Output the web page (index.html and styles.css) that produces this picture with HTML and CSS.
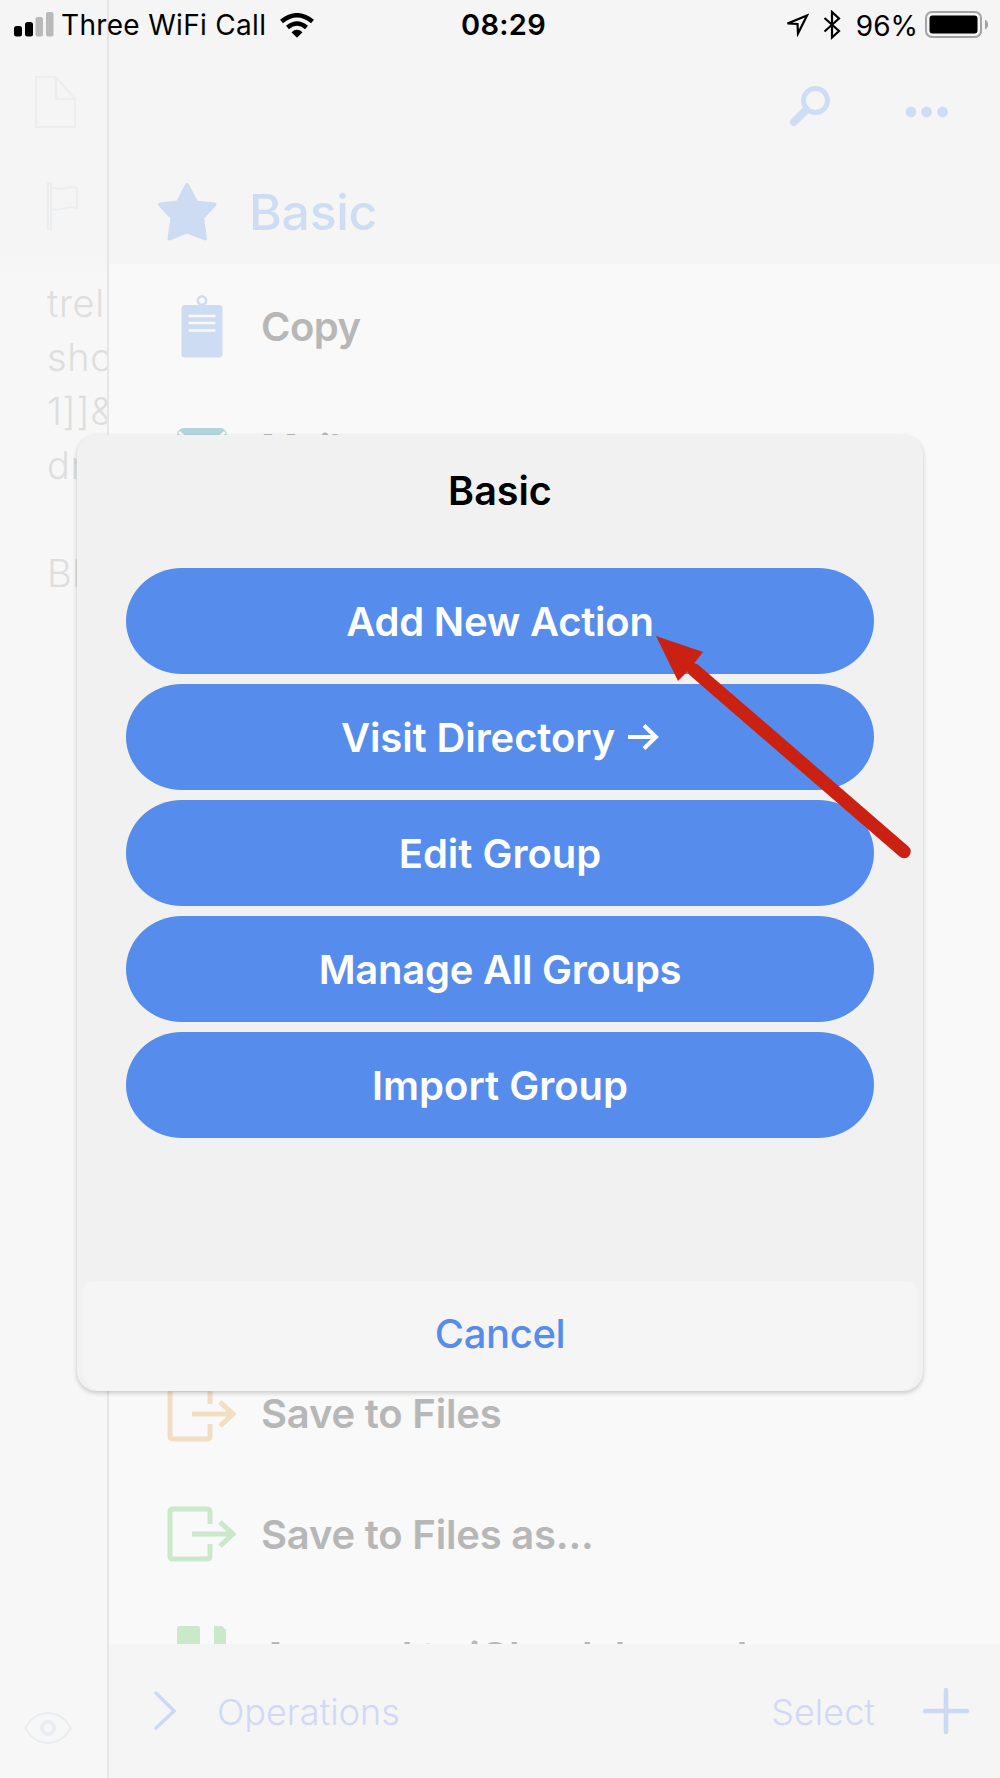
FILE: index.html
```html
<!DOCTYPE html>
<html lang="en">
<head>
<meta charset="utf-8">
<title>Basic actions</title>
<link rel="stylesheet" href="styles.css">
</head>
<body>
<div class="screen">
  <aside class="draft">
    <svg class="draft-doc" width="43" height="54" viewBox="0 0 43 54"><path d="M2 2H22L41 24V52H2ZM22 2V24H41"/></svg>
    <svg class="draft-flag" width="34" height="50" viewBox="0 0 34 50"><path d="M2 2H5V48H2ZM5 6C14 11 22 4 31 7V27C22 24 14 31 5 28"/></svg>
    <p class="draft-text">trel<br>sho<br>1]]&amp;<br>dr<br><br>Bl</p>
    <svg class="draft-eye" width="50" height="34" viewBox="0 0 50 34"><path d="M2 17C8 7 16 2 25 2S42 7 48 17C42 27 34 32 25 32S8 27 2 17Z"/><circle cx="25" cy="17" r="6"/></svg>
  </aside>

  <main class="actions">
    <header class="actions-head">
      <div class="tools">
        <svg width="42" height="42" viewBox="0 0 42 42"><circle cx="26.500" cy="15.500" r="12"/><path class="handle" d="M17 25L5 37"/></svg>
        <svg class="dots" width="44" height="12" viewBox="0 0 44 12"><circle cx="6" cy="6" r="5.400"/><circle cx="21.500" cy="6" r="5.400"/><circle cx="37.500" cy="6" r="5.400"/></svg>
      </div>
      <div class="group">
        <svg width="60" height="60" viewBox="0 0 60 60"><path d="M30 4L39 21.500L57.500 23.500L45 37L48 57.500L30 50.500L12.500 57.500L15.500 37L3 23.500L21 21.500Z"/></svg>
        <h1>Basic</h1>
      </div>
    </header>
    <ul class="list">
      <li class="row">
        <span class="row-icon"><svg class="copy" width="42" height="64" viewBox="0 0 42 64"><circle class="ring" cx="21" cy="6.500" r="4.200"/><rect x=".5" y="11" width="41" height="52.500" rx="3.500"/><path d="M7.500 22H34.500M7.500 29H34.500M7.500 36.500H34.500"/></svg></span>
        Copy
      </li>
      <li class="row">
        <span class="row-icon"><svg class="mail" width="50" height="38" viewBox="0 0 50 38"><rect width="50" height="38" rx="7"/><path d="M2 4L20 20Q25 24 30 20L48 4"/></svg></span>
        <span class="label">Mail</span>
      </li>
      <li class="row-gap"></li>
      <li class="row long">
        <span class="row-icon"><svg class="export orange" width="69" height="56" viewBox="0 0 69 56"><path d="M43 18V6Q43 3 40 3H6Q3 3 3 6V50Q3 53 6 53H40Q43 53 43 50V38M25 28H66M53 16L66 28L53 40"/></svg></span>
        Save to Files
      </li>
      <li class="row long">
        <span class="row-icon"><svg class="export green" width="69" height="56" viewBox="0 0 69 56"><path d="M43 18V6Q43 3 40 3H6Q3 3 3 6V50Q3 53 6 53H40Q43 53 43 50V38M25 28H66M53 16L66 28L53 40"/></svg></span>
        Save to Files as...
      </li>
      <li class="row long">
        <span class="row-icon"><svg class="journal" width="50" height="58" viewBox="0 0 50 58"><path d="M2 0H21Q23 0 23 2V58H0V2Q0 0 2 0ZM37 0H45L49 4V58H37Z"/></svg></span>
        <span class="label">Append to iCloud Journal</span>
      </li>
    </ul>
    <footer class="bar">
      <svg width="24" height="40" viewBox="0 0 24 40"><path d="M2 2L20 20L2 37"/></svg>
      <span class="operations">Operations</span>
      <span class="select">Select</span>
      <svg class="plus" width="48" height="48" viewBox="0 0 48 48"><path d="M3 24H45M24 3V45"/></svg>
    </footer>
  </main>

  <div class="status">
    <div class="carrier">
      <svg width="40" height="26" viewBox="0 0 40 26"><rect x="0" y="14" width="8" height="10.500" rx="2.500"/><rect x="11" y="10" width="8" height="14.500" rx="2.500"/><g fill="#b9b9b9"><rect x="21.500" y="5" width="7.500" height="19.500" rx="2"/><rect x="32" y="0" width="7.500" height="24.500" rx="2"/></g></svg>
      <span class="carrier-name">Three WiFi Call</span>
      <svg class="wifi" width="34" height="25" viewBox="0 0 34 25"><path class="arc" d="M1.500 8.500Q17 -4 32.500 8.500M7.500 14.500Q17 6.500 26.500 14.500"/><path d="M11.500 19.200Q17 14.500 22.500 19.200L17 24.800Z"/></svg>
    </div>
    <span class="clock">08:29</span>
    <div class="power">
      <svg class="locate" width="24" height="24" viewBox="0 0 24 24"><path d="M2.500 10.500L22 2.500L13 20.500L12.500 11Z"/></svg>
      <svg class="bluetooth" width="18" height="30" viewBox="0 0 18 30"><path d="M1.500 8L16 21L9 27.500V2L16 8.500L1.500 21.500"/></svg>
      <span class="charge">96%</span>
      <svg width="64" height="28" viewBox="0 0 64 28"><rect x="1" y="1" width="55" height="25" rx="6" fill="none" stroke="#a3a3a3" stroke-width="2"/><rect x="4.500" y="4.500" width="48" height="18" rx="3"/><path fill="#a3a3a3" d="M60 8.500Q63 10 63 13.500T60 18.500Z"/></svg>
    </div>
  </div>

  <section class="dialog">
    <h2>Basic</h2>
    <div class="buttons">
      <button class="tight">Add New Action</button>
      <button class="visit">Visit Directory <svg width="32" height="28" viewBox="0 0 32 28"><path d="M1 14H29M17 2.500L29 14L17 25.500"/></svg></button>
      <button>Edit Group</button>
      <button class="tight">Manage All Groups</button>
      <button>Import Group</button>
    </div>
    <button class="cancel">Cancel</button>
  </section>

  <svg class="pointer" width="256" height="226" viewBox="0 0 256 226"><path class="shaft" d="M248 215.500L38 34"/><path d="M0 0L47 16L40 25L31 36L22 45Z"/></svg>
</div>
</body>
</html>
```
FILE: styles.css
```css
* { box-sizing: border-box; }

body {
  margin: 0;
  font-family: Inter, "Liberation Sans", sans-serif;
}

svg { display: block; flex: none; }

.screen {
  display: grid;
  grid-template: 1778px / 107px 893px;
  width: 1000px;
  overflow: hidden;
  background: #f7f7f7;
}

/* Draft visible behind the action drawer */
.draft {
  grid-area: 1 / 1;
  display: flex;
  flex-direction: column;
  padding-top: 75px;
  overflow: hidden;
  background: linear-gradient(#f5f5f5 250px, #f7f7f7 290px);
}
.draft svg { fill: none; stroke: #ebedef; stroke-width: 2; }
.draft-doc { margin-left: 34px; }
.draft-flag { margin: 52px 0 0 46px; }
.draft-text {
  margin: 45px 0 0 47px;
  font-size: 38px;
  font-weight: 300;
  letter-spacing: .6px;
  line-height: 54px;
  white-space: nowrap;
  color: #dedede;
}
.draft .draft-eye { margin: auto 0 33px 23px; stroke: #e9ecf1; }
.draft-eye circle { stroke-width: 4; }

/* Action drawer */
.actions {
  grid-area: 1 / 2;
  display: grid;
  grid-template-rows: 264px 1380px 134px;
  border-left: 2px solid #e6e6e6;
  background: #f9f9f9;
}
.actions-head { padding-top: 85px; background: #f5f5f5; }
.tools {
  display: flex;
  gap: 73.500px;
  height: 42px;
  padding-left: 680px;
}
.tools svg { fill: none; stroke: #cfddf4; stroke-width: 5; }
.tools .handle { stroke-width: 8; stroke-linecap: round; }
.tools .dots { margin-top: 20.500px; fill: #cfddf4; stroke: none; }
.group {
  display: flex;
  align-items: center;
  gap: 32px;
  height: 60px;
  margin: 54px 0 0 48px;
}
.group svg { fill: #cddbf3; stroke: #cddbf3; stroke-width: 4; stroke-linejoin: round; }
.group h1 {
  margin: 2px 0 0;
  font-size: 50px;
  font-weight: 500;
  letter-spacing: -.3px;
  color: #cfddf4;
}

.list {
  margin: 0;
  padding: 2px 0 0;
  list-style: none;
  overflow: hidden;
}
.row {
  display: flex;
  align-items: center;
  gap: 15px;
  height: 120.800px;
  padding-left: 48px;
  font-size: 40px;
  font-weight: 600;
  letter-spacing: -.5px;
  white-space: nowrap;
  color: #b7b7b7;
}
.row.long { letter-spacing: -.2px; }
.label { padding-top: 3px; }
.row-gap { height: 845.600px; }
.row-icon { display: flex; justify-content: center; width: 89px; }
.copy { fill: #cddbf3; stroke: #f9f9f9; stroke-width: 2.500; }
.copy rect { stroke: none; }
.copy .ring { fill: none; stroke: #cddbf3; }
.mail { fill: #b3d4db; stroke: #f9f9f9; stroke-width: 3; }
.mail rect { stroke: none; }
.export { fill: none; stroke-width: 5; }
.orange { stroke: #f2dfc3; }
.green { stroke: #cbe8ca; }
.journal { fill: #cbe8ca; }

.bar {
  display: flex;
  align-items: center;
  padding: 0 30px 0 45px;
  background: #f5f5f5;
  font-size: 36px;
  font-weight: 300;
  color: #d0d8f5;
}
.bar svg { fill: none; stroke: #ccd9f4; stroke-width: 3.500; stroke-linecap: round; }
.bar .plus { margin-left: 47px; stroke-width: 4.500; }
.bar span { padding-top: 2px; }
.operations { margin-left: 39px; }
.select { margin-left: auto; }

/* Status bar */
.status {
  grid-area: 1 / 1 / 2 / 3;
  align-self: start;
  display: grid;
  grid-template-columns: 1fr auto 1fr;
  height: 50px;
  padding: 0 11px 0 14px;
  font-size: 28px;
}
.carrier, .power { display: flex; align-items: center; }
.carrier-name { margin-left: 7px; letter-spacing: .32px; }
.wifi { margin-left: 14px; }
.wifi .arc { fill: none; stroke: #000; stroke-width: 4.500; }
.clock { padding: 0 0 0 4px; line-height: 50px; font-size: 29px; font-weight: 600; letter-spacing: .3px; }
.power { justify-content: flex-end; }
.locate, .bluetooth { fill: none; stroke: #000; stroke-width: 2.200; }
.bluetooth { margin: 0 15px 0 14px; }
.charge { margin-right: 7px; padding-top: 1px; }

/* Group dialog */
.dialog {
  grid-area: 1 / 1 / 2 / 3;
  display: flex;
  flex-direction: column;
  width: 846px;
  height: 956px;
  margin: 435px 0 0 77px;
  overflow: hidden;
  border-radius: 20px;
  background: #f1f1f1;
  box-shadow: 0 2px 5px rgba(0, 0, 0, .2);
  z-index: 1;
}
.dialog h2 {
  height: 133px;
  margin: 0;
  font-size: 39.500px;
  font-weight: 600;
  line-height: 112px;
  text-align: center;
}
.buttons { display: flex; flex-direction: column; gap: 10px; padding: 0 49px; }
button {
  display: flex;
  align-items: center;
  justify-content: center;
  height: 106px;
  padding: 0;
  border: 0;
  border-radius: 56px / 53px;
  background: #568ceb;
  font: 600 40px Inter, "Liberation Sans", sans-serif;
  color: #fff;
}
.tight { letter-spacing: -.25px; }
.visit { gap: 12px; letter-spacing: -.1px; }
.visit svg { fill: none; stroke: #fff; stroke-width: 4; }
.cancel {
  height: 110px;
  margin: auto 6px 0;
  padding-bottom: 6px;
  border-radius: 10px 10px 20px 20px;
  background: #f5f5f5;
  font-weight: 500;
  letter-spacing: -.4px;
  color: #568ceb;
}

/* Tutorial arrow lying over the dialog */
.pointer {
  grid-area: 1 / 1 / 2 / 3;
  margin: 636px 0 0 656px;
  fill: #cb2112;
  z-index: 2;
}
.pointer .shaft { stroke: #cb2112; stroke-width: 13.500; stroke-linecap: round; }
```
